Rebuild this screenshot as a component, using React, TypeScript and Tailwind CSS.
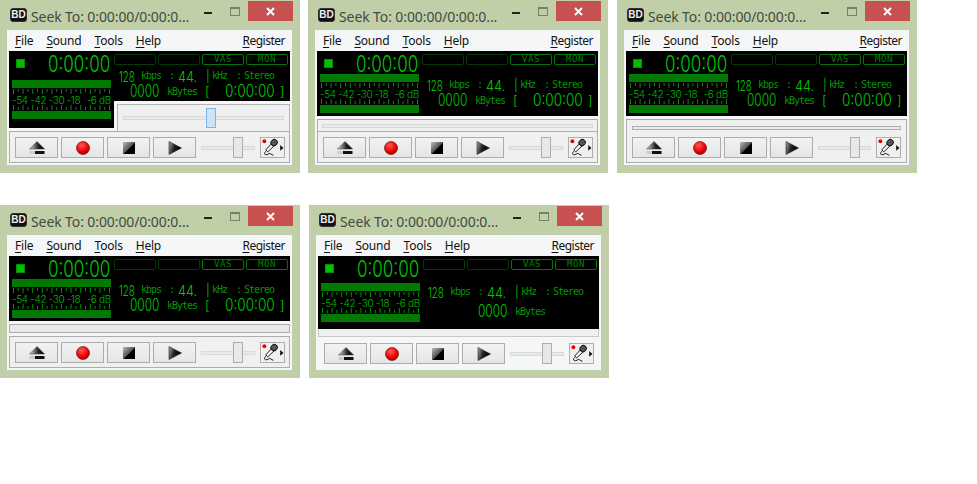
import React from 'react';

type Variant = 'slider' | 'inset' | 'merged' | 'flat' | 'idle';

const TICKS = Array.from({ length: 21 }, (_, i) => i);

const AppIcon = () => (
  <div className="flex h-[14px] w-[17px] items-center justify-center rounded-[3px] border border-[#333] bg-[#111] font-['Liberation_Sans',sans-serif] text-[10px] font-bold leading-none text-[#eee]">
    BD
  </div>
);

const EjectIcon = () => (
  <svg width="16" height="14" viewBox="0 0 16 14">
    <defs>
      <linearGradient id="ej" x1="0" y1="0" x2="1" y2="0">
        <stop offset="0" stopColor="#ddd" />
        <stop offset="0.6" stopColor="#222" />
        <stop offset="1" stopColor="#000" />
      </linearGradient>
    </defs>
    <path d="M8 0.5 L15.5 8 H0.5 Z" fill="url(#ej)" stroke="#333" strokeWidth="0.5" />
    <rect x="0.5" y="10" width="6" height="3" fill="#ccc" />
    <rect x="6" y="10" width="9.5" height="3" fill="#111" />
  </svg>
);

const RecordIcon = () => (
  <svg width="14" height="14" viewBox="0 0 14 14">
    <defs>
      <radialGradient id="rec" cx="0.4" cy="0.3" r="0.8">
        <stop offset="0" stopColor="#ff5a5a" />
        <stop offset="0.6" stopColor="#ee0000" />
        <stop offset="1" stopColor="#a00000" />
      </radialGradient>
    </defs>
    <circle cx="7" cy="7" r="6.5" fill="url(#rec)" stroke="#500" strokeWidth="0.6" />
  </svg>
);

const StopIcon = () => (
  <svg width="12" height="12" viewBox="0 0 12 12">
    <defs>
      <linearGradient id="st" x1="0" y1="0" x2="1" y2="1">
        <stop offset="0" stopColor="#bbb" />
        <stop offset="0.5" stopColor="#555" />
        <stop offset="0.55" stopColor="#000" />
      </linearGradient>
    </defs>
    <rect width="12" height="12" fill="url(#st)" />
  </svg>
);

const PlayIcon = () => (
  <svg width="14" height="14" viewBox="0 0 14 14">
    <defs>
      <linearGradient id="pl" x1="0" y1="0" x2="1" y2="0.3">
        <stop offset="0" stopColor="#aaa" />
        <stop offset="0.5" stopColor="#222" />
        <stop offset="1" stopColor="#000" />
      </linearGradient>
    </defs>
    <path d="M1 0.5 L13.5 7 L1 13.5 Z" fill="url(#pl)" stroke="#222" strokeWidth="0.6" />
  </svg>
);

const MicIcon = () => (
  <svg width="24" height="19" viewBox="0 0 24 19">
    <circle cx="3.5" cy="3" r="2" fill="#ee0000" />
    <path d="M5 12 L11 5.5 L13.5 8 L7 14 Z" fill="#fff" stroke="#111" strokeWidth="1" />
    <rect x="10.5" y="1.5" width="6.5" height="6" rx="2.5" transform="rotate(-45 13.5 4.5)" fill="#555" stroke="#111" />
    <path d="M5.5 13 C3 15 3 17.5 6 17 C8 16.5 9 15 10 16 C11 17 12 17.5 13 17.5" fill="none" stroke="#111" strokeWidth="1" />
    <path d="M20 7 L23.5 10 L20 13 Z" fill="#111" />
  </svg>
);

const MeterTicks = ({ flip }: { flip?: boolean }) => (
  <svg width="99" height="5" viewBox="0 0 99 5" className="block">
    {TICKS.map((i) => {
      const x = 1.5 + i * 4.8;
      const long = i % 2 === 0;
      const y1 = flip ? (long ? 0 : 2) : 0;
      const y2 = flip ? 5 : long ? 5 : 3;
      return <line key={i} x1={x} x2={x} y1={y1} y2={y2} stroke="#009000" strokeWidth="1" />;
    })}
  </svg>
);

const Meter = () => (
  <div className="mx-[3px] w-[99px]">
    <div className="h-[8px] bg-[#007a00]" />
    <div className="mt-px">
      <MeterTicks />
    </div>
    <div className="flex h-[11px] items-center justify-between font-['Inter',sans-serif] text-[10px] font-light leading-none tracking-[-0.3px] text-[#00b800]">
      <span>-54</span>
      <span>-42</span>
      <span>-30</span>
      <span>-18</span>
      <span className="ml-1">-6 dB</span>
    </div>
    <MeterTicks flip />
    <div className="mt-px h-[8px] bg-[#007a00]" />
  </div>
);

const Seg = ({ children, className = '' }: { children: React.ReactNode; className?: string }) => (
  <span className={`origin-left whitespace-nowrap font-['Inter',sans-serif] font-light leading-none text-[#00c800] ${className}`}>
    {children}
  </span>
);

const Small = ({ children, className = '' }: { children: React.ReactNode; className?: string }) => (
  <span className={`whitespace-nowrap font-['DejaVu_Sans_Mono',monospace] text-[10px] leading-none tracking-[-1px] text-[#059505] ${className}`}>
    {children}
  </span>
);

const LedBox = ({ label, on }: { label?: string; on?: boolean }) => (
  <div
    className={`flex h-[11px] w-[42px] items-center justify-center rounded-[2px] border font-['DejaVu_Sans_Mono',monospace] text-[9px] leading-none tracking-[0.5px] ${
      on ? 'border-[#007800] text-[#008000]' : 'border-[#003c00]'
    }`}
  >
    {label}
  </div>
);

const TopRow = () => (
  <div className="flex gap-[2px] pt-[3px]">
    <LedBox />
    <LedBox />
    <LedBox label="VAS" on />
    <LedBox label="MON" on />
  </div>
);

const InfoRow1 = ({ className }: { className: string }) => (
  <div className={`flex h-[12px] items-center ${className}`}>
    <Seg className="ml-[5px] w-[22px] scale-x-[0.65] text-[15px]">128</Seg>
    <Small className="w-[19px]">kbps</Small>
    <Small className="ml-[9px] w-[9px]">:</Small>
    <Seg className="w-[28px] scale-x-[0.85] text-[15px]">44.</Seg>
    <Seg className="w-[6px] text-[12px]">|</Seg>
    <Small className="w-[16px]">kHz</Small>
    <Small className="ml-[8px] w-[8px]">:</Small>
    <Small className="text-[#0aa00a]">Stereo</Small>
  </div>
);

const InfoRow2 = () => (
  <div className="mt-[3px] flex h-[13px] items-center">
    <Seg className="ml-[16px] w-[37px] scale-x-[0.7] text-[17px]">0000</Seg>
    <Small className="w-[30px]">kBytes</Small>
    <Seg className="ml-[8px] w-[20px] text-[13px]">[</Seg>
    <Seg className="w-[55px] scale-x-[0.8] text-[17px]">0:00:00</Seg>
    <Seg className="text-[13px]">]</Seg>
  </div>
);

const LeftLcd = ({ topClass }: { topClass: string }) => (
  <div className="w-[105px] shrink-0">
    <div className={`flex ${topClass}`}>
      <div className="ml-[7px] mt-[8px] size-[9px] shrink-0 border border-[#009000] bg-[#00c000]" />
      <Seg className="ml-[23px] mt-[2px] w-[63px] scale-x-[0.74] text-[23px]">0:00:00</Seg>
    </div>
    <Meter />
  </div>
);

const Screen = ({ variant }: { variant: Variant }) => {
  if (variant === 'slider') {
    return (
      <div className="mx-[2px] flex h-[80px]">
        <div className="h-[77px] w-[105px] bg-black">
          <LeftLcd topClass="h-[29px]" />
        </div>
        <div className="w-[176px]">
          <div className="h-[50px] bg-black">
            <TopRow />
            <InfoRow1 className="mt-[5px]" />
            <InfoRow2 />
          </div>
          <div className="relative ml-[3px] mt-[3px] flex h-[27px] items-center border border-b-0 border-[#b5b5b5] bg-[#f0f0f0] px-[5px]">
            <div className="h-[4px] w-full border border-[#d6dbd6] bg-[#e7eae7]" />
            <div className="absolute left-[88px] top-[3px] h-[20px] w-[10px] border border-[#7eb4ea] bg-[#cce4f7]" />
          </div>
        </div>
      </div>
    );
  }

  const idle = variant === 'idle';
  return (
    <div className={`mx-[2px] flex bg-black ${idle ? 'h-[73px]' : 'h-[65px]'}`}>
      <LeftLcd topClass={idle ? 'h-[27px]' : 'h-[23px]'} />
      <div className="w-[176px]">
        <TopRow />
        {idle ? (
          <>
            <InfoRow1 className="mt-[16px]" />
            <div className="mt-[7px] flex h-[13px] items-center pl-[55px]">
              <Seg className="w-[37px] scale-x-[0.7] text-[17px]">0000</Seg>
              <Small>kBytes</Small>
            </div>
          </>
        ) : (
          <>
            <InfoRow1 className="mt-[14px]" />
            <InfoRow2 />
          </>
        )}
      </div>
    </div>
  );
};

const PlayerButton = ({ children }: { children: React.ReactNode }) => (
  <div className="flex h-[21px] w-[43px] items-center justify-center border border-[#adadad] bg-gradient-to-b from-[#f2f2f2] to-[#e5e5e5]">
    {children}
  </div>
);

const Controls = () => (
  <>
    <div className="flex gap-[3px]">
      <PlayerButton>
        <EjectIcon />
      </PlayerButton>
      <PlayerButton>
        <RecordIcon />
      </PlayerButton>
      <PlayerButton>
        <StopIcon />
      </PlayerButton>
      <PlayerButton>
        <PlayIcon />
      </PlayerButton>
    </div>
    <div className="relative ml-[5px] flex h-[21px] w-[54px] items-center">
      <div className="h-[4px] w-full border border-[#d6dbd6] bg-[#e7eae7]" />
      <div className="absolute left-[32px] top-0 h-[21px] w-[10px] border border-[#adadad] bg-[#e8e8e8]" />
    </div>
    <div className="ml-[5px] flex h-[21px] w-[25px] items-center justify-center border border-[#adadad] bg-[#f0f0f0]">
      <MicIcon />
    </div>
  </>
);

const Bottom = ({ variant }: { variant: Variant }) => {
  if (variant === 'merged') {
    return (
      <div className="mx-[2px] mt-[3px] h-[44px] border border-[#adadad] bg-[#f0f0f0] px-[4px] pt-[6px]">
        <div className="mx-px h-[4px] border border-[#adadad] bg-[#e7eae7]" />
        <div className="mt-[7px] flex px-px">
          <Controls />
        </div>
      </div>
    );
  }
  if (variant === 'idle') {
    return (
      <>
        <div className="mx-[2px] h-[8px] border border-t-0 border-[#c8c8c8] bg-[#eef0f0]" />
        <div className="mx-[2px] mt-[6px] flex pl-[6px]">
          <Controls />
        </div>
      </>
    );
  }
  return (
    <>
      {variant === 'inset' && (
        <div className="mx-[2px] mt-[3px] flex h-[12px] items-center border border-b-0 border-[#adadad] bg-[#f0f0f0] px-[4px]">
          <div className="h-[4px] w-full border border-[#d6dbd6] bg-[#e7eae7]" />
        </div>
      )}
      {variant === 'flat' && (
        <div className="mx-[2px] mb-[3px] mt-[3px] h-[9px] border border-[#adadad] bg-[#e7eaea]" />
      )}
      <div className="mx-[2px] flex h-[32px] border border-[#adadad] bg-[#f0f0f0] pl-[5px] pt-[5px]">
        <Controls />
      </div>
    </>
  );
};

const MenuLabel = ({ mn, rest, className }: { mn: string; rest: string; className: string }) => (
  <span className={className}>
    <span className="underline underline-offset-2">{mn}</span>
    {rest}
  </span>
);

const SeekWindow = ({ variant, className = '' }: { variant: Variant; className?: string }) => (
  <div className={`h-[173px] w-[300px] bg-[#c1cfa9] ${className}`}>
    <div className="flex h-[30px] pl-[10px] pr-[7px]">
      <div className="mt-[8px]">
        <AppIcon />
      </div>
      <span className="ml-[4px] mt-[7px] whitespace-nowrap font-['Noto_Sans',sans-serif] text-[14px] leading-[20px] tracking-[-0.1px] text-[#434a40]">
        Seek To: 0:00:00/0:00:0...
      </span>
      <div className="ml-auto mt-[12px] h-[2px] w-[8px] bg-[#222]" />
      <div className="ml-[18px] mt-[7px] h-[9px] w-[10px] border border-t-2 border-[#77806f]" />
      <div className="ml-[8px] mt-px flex h-[20px] w-[45px] items-center justify-center bg-[#c75050]">
        <svg width="9" height="9" viewBox="0 0 9 9">
          <path d="M1 1 L8 8 M8 1 L1 8" stroke="#fff" strokeWidth="2" />
        </svg>
      </div>
    </div>
    <div className="mx-[7px] h-[135px] w-[285px] bg-[#f5f6f7]">
      <div className="flex h-[21px] items-center pt-px font-['Noto_Sans',sans-serif] text-[12px] leading-none tracking-[-0.2px] text-[#111]">
        <MenuLabel mn="F" rest="ile" className="ml-[8px]" />
        <MenuLabel mn="S" rest="ound" className="ml-[13px]" />
        <MenuLabel mn="T" rest="ools" className="ml-[13px]" />
        <MenuLabel mn="H" rest="elp" className="ml-[13px]" />
        <MenuLabel mn="R" rest="egister" className="ml-auto mr-[7px] tracking-[-0.5px]" />
      </div>
      <Screen variant={variant} />
      <Bottom variant={variant} />
    </div>
  </div>
);

export default function App() {
  return (
    <div className="h-[484px] w-[977px] overflow-hidden bg-white">
      <div className="flex">
        <SeekWindow variant="slider" />
        <SeekWindow variant="inset" className="ml-[8px]" />
        <SeekWindow variant="merged" className="ml-[9px]" />
      </div>
      <div className="mt-[32px] flex">
        <SeekWindow variant="flat" />
        <SeekWindow variant="idle" className="ml-[9px]" />
      </div>
    </div>
  );
}
